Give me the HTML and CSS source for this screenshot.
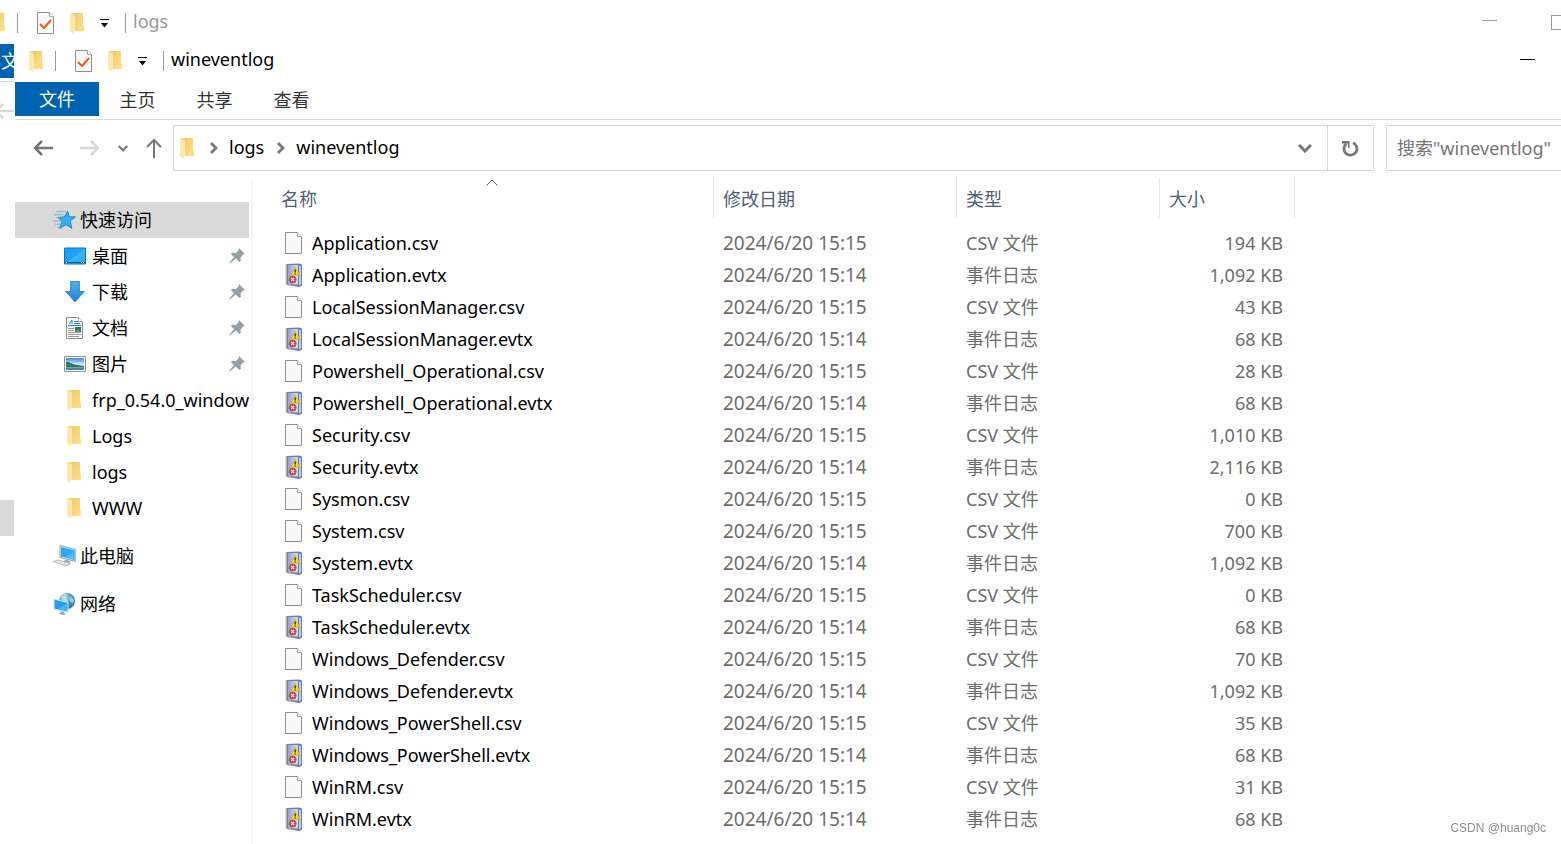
FILE: index.html
```html
<!DOCTYPE html>
<html lang="zh-CN">
<head>
<meta charset="utf-8">
<title>wineventlog</title>
<link rel="stylesheet" href="styles.css">
</head>
<body>
<svg class="defs" aria-hidden="true">
  <defs>
    <linearGradient id="gBack" x1="0" y1="0" x2="1" y2="1"><stop offset="0" stop-color="#eec969"/><stop offset="1" stop-color="#ffe08a"/></linearGradient>
    <linearGradient id="gBlue" x1="0" y1="0" x2="1" y2="1"><stop offset="0" stop-color="#0d9bff"/><stop offset=".5" stop-color="#1ea4ff"/><stop offset=".52" stop-color="#43b4ff"/><stop offset="1" stop-color="#1ea4ff"/></linearGradient>
    <linearGradient id="gArrow" x1="0" y1="0" x2="0" y2="1"><stop offset="0" stop-color="#55aeee"/><stop offset="1" stop-color="#1f80dc"/></linearGradient>
    <linearGradient id="gSky" x1="0" y1="0" x2="0" y2="1"><stop offset="0" stop-color="#3f86dc"/><stop offset=".55" stop-color="#d9effa"/><stop offset="1" stop-color="#a8c8dd"/></linearGradient>
    <radialGradient id="gGlobe" cx=".35" cy=".3" r=".8"><stop offset="0" stop-color="#b9e0f0"/><stop offset=".5" stop-color="#4d9cc0"/><stop offset="1" stop-color="#1f6c94"/></radialGradient>
    <linearGradient id="gBook" x1="0" y1="0" x2="1" y2="0"><stop offset="0" stop-color="#8fa6d0"/><stop offset="1" stop-color="#cfe0f5"/></linearGradient>
  </defs>
  <symbol id="folder" viewBox="0 0 14 21">
    <path d="M2 0h11v12l1 1v5H3z" fill="url(#gBack)"/>
    <path d="M0 0l5 3v14l-1 1v3L0 18z" fill="#ffe8a6"/><path d="M0 0h4l1 3z" fill="#f4d47d"/>
  </symbol>
  <symbol id="file" viewBox="0 0 17 22">
    <path d="M.5.5h12l4 4v17H.5z" fill="#f8f9f9" stroke="#8f8f8f"/><path d="M12.500.5v4h4" fill="#fff" stroke="#a5a5a5"/>
  </symbol>
  <symbol id="check" viewBox="0 0 17 22">
    <use href="#file" width="17" height="22"/><path d="M3 12l4 4 7-8" fill="none" stroke="#f25a12" stroke-width="2"/>
  </symbol>
  <symbol id="more" viewBox="0 0 9 9"><path d="M0 0h9v1H0zM1 4h7L4.500 8.500z" fill="#000"/></symbol>
  <symbol id="event" viewBox="0 0 17 24">
    <path d="M2 1L14 .5l3 1v21L14 24 2 22z" fill="#6d7fae"/>
    <path d="M3 2h10v19.500H3z" fill="url(#gBook)"/><path d="M14 3l2-.5v19l-2 .8z" fill="#b8cceb"/>
    <path d="M1.500 1.500v20.500" stroke="#777" stroke-width="2" stroke-dasharray="1 1"/>
    <path d="M10.200 4l4.300 8H6z" fill="#ffdb15" stroke="#c09a00" stroke-width=".5"/><path d="M10.200 6.500v3m0 1v1" stroke="#222" stroke-width="1.300"/>
    <circle cx="7.700" cy="16.500" r="3.700" fill="#d93a3c"/><path d="M6.200 15l3 3m0-3l-3 3" stroke="#fff" stroke-width="1.200"/>
  </symbol>
  <symbol id="star" viewBox="0 0 22 20">
    <path d="M14 1.500l1.500 5.500h6L16.500 11l1.500 7-5.500-3.500L6.500 18l2-6.500L5 7.500l6-.5z" fill="#33b0f5" stroke="#1679bc" stroke-width=".8"/>
    <path d="M3 2h9M1 5h9M3 8h4M0 11h7M2 14h5M4 17h3" stroke="#5daed8" stroke-width=".8"/>
  </symbol>
  <symbol id="desk" viewBox="0 0 22 17"><path d="M.5.5h21v16H.5z" fill="url(#gBlue)" stroke="#0b74c5"/><path d="M1 15h20" stroke="#075a9d"/><path d="M2 15h1m14 0h1m1 0h1" stroke="#fff"/></symbol>
  <symbol id="down" viewBox="0 0 18 20"><path d="M5 .5h8v9h4.500L9 19 .5 9.500H5z" fill="url(#gArrow)" stroke="#2b7fc8" stroke-width=".8"/></symbol>
  <symbol id="doc" viewBox="0 0 18 22">
    <use href="#file" width="17" height="22"/>
    <path d="M3 7l3-4v4M8 4.500h4M8 6.500h6M2 8.500h13" fill="none" stroke="#2186ce"/><path d="M2 11.500h6M2 13.500h6M2 15.500h13M2 17.500h13M2 19.500h11" stroke="#999"/><path d="M9 10h6v5H9z" fill="#2a6a94"/><path d="M9 14l3-2 3 3H9z" fill="#54915f"/>
  </symbol>
  <symbol id="pic" viewBox="0 0 22 16">
    <path d="M.5.5h21v15H.5z" fill="#fff" stroke="#929292"/><path d="M2 2h18v12H2z" fill="url(#gSky)"/><path d="M2 6c4-.5 5 2 9 2.500s5 1 9 1.500v1.500H2z" fill="#387164"/><path d="M2 12h18v2H2z" fill="#4d82a6"/>
  </symbol>
  <symbol id="pc" viewBox="0 0 23 21">
    <path d="M7 0l16 4v12L7 12z" fill="#e3eaf0" stroke="#738a9c" stroke-width=".8"/><path d="M8 1.500l14 3.500v9.500L8 11z" fill="#2da7f7"/><path d="M22 5v9.500L12 12z" fill="#52bbff"/>
    <path d="M13 14l5 2-4 2-4-2z" fill="#a5afb5"/><path d="M0 16l5-1.500L18 18l-5 2.500z" fill="#d4d9dc" stroke="#9ca4a9" stroke-width=".7"/><path d="M2 16.300l11 3M5 15.500l10 3" stroke="#fff" stroke-width=".7" stroke-dasharray="1.500 1"/>
  </symbol>
  <symbol id="net" viewBox="0 0 22 22">
    <circle cx="13.500" cy="8" r="8" fill="url(#gGlobe)"/><path d="M7 4c3-4 6-3 7-2l-2 3 3 2-2 4-3-2zM17 3l4 4-2 4-3-4z" fill="#c2e4ec" opacity=".65"/>
    <path d="M.5 6l14 3.500V19L.5 16z" fill="#229ff0" stroke="#d5e7f2"/><path d="M14 10v8L5 16z" fill="#46b4fa"/><path d="M7 18l4 1v2l2 .5-4 .5-4-1.500 2-.5z" fill="#9aabb5"/>
  </symbol>
  <symbol id="pin" viewBox="0 0 16 16"><path d="M10 0l6 6-2 .5-2.500 3 .3 3.500-1.500 1-3.500-3.500L1 15.500l-.7-.7L5 9.200 2 6l1-1.200 3.800.2 2.700-2.500z" fill="#94a0a8"/></symbol>
  <symbol id="left" viewBox="0 0 20 16"><path d="M9 1L2 8l7 7M2 8h18" fill="none" stroke="currentColor" stroke-width="2.500"/></symbol>
  <symbol id="right" viewBox="0 0 20 16"><path d="M11 1l7 7-7 7M18 8H0" fill="none" stroke="currentColor" stroke-width="2.500"/></symbol>
  <symbol id="up" viewBox="0 0 16 20"><path d="M1 9l7-7 7 7M8 2v18" fill="none" stroke="currentColor" stroke-width="2"/></symbol>
  <symbol id="chev" viewBox="0 0 14 9"><path d="M1 1l6 6 6-6" fill="none" stroke="currentColor" stroke-width="3"/></symbol>
  <symbol id="crumb" viewBox="0 0 8 12"><path d="M1 1l5 5-5 5" fill="none" stroke="currentColor" stroke-width="2.800"/></symbol>
  <symbol id="reload" viewBox="0 0 17 17"><path d="M11 2.700A6.500 6.500 0 1 1 4.500 3.500" fill="none" stroke="currentColor" stroke-width="2.800"/><path d="M0 1h7.500v7H6V3.500H0z" fill="currentColor"/></symbol>
</svg>

<header class="titlebar titlebar-back">
  <svg class="i-folder"><use href="#folder"/></svg><span class="sep"></span>
  <button class="qa qa-check" aria-label="属性"><svg class="i-file"><use href="#check"/></svg></button>
  <button class="qa" aria-label="新建文件夹"><svg class="i-folder"><use href="#folder"/></svg></button>
  <button class="qa" aria-label="自定义快速访问工具栏"><svg class="i-more"><use href="#more"/></svg></button>
  <span class="sep"></span><span class="title">logs</span>
  <div class="controls"><button class="min" aria-label="最小化"></button><button class="max" aria-label="最大化"></button></div>
</header>
<div class="stack">
  <aside class="behind">
    <div class="behind-tab">文件</div>
    <div class="behind-nav"><svg class="i-nav"><use href="#left"/></svg></div>
    <div class="behind-selected"></div>
  </aside>
  <main class="window">
    <header class="titlebar">
      <svg class="i-folder"><use href="#folder"/></svg><span class="sep"></span>
      <button class="qa qa-check" aria-label="属性"><svg class="i-file"><use href="#check"/></svg></button>
      <button class="qa" aria-label="新建文件夹"><svg class="i-folder"><use href="#folder"/></svg></button>
      <button class="qa" aria-label="自定义快速访问工具栏"><svg class="i-more"><use href="#more"/></svg></button>
      <span class="sep"></span><h1 class="title">wineventlog</h1>
      <div class="controls"><button class="min" aria-label="最小化"></button></div>
    </header>
    <nav class="tabs"><button class="tab tab-file">文件</button><button class="tab">主页</button><button class="tab">共享</button><button class="tab">查看</button></nav>
    <div class="navrow">
      <div class="arrows">
        <button aria-label="后退"><svg class="i-nav"><use href="#left"/></svg></button>
        <button class="off" aria-label="前进"><svg class="i-nav"><use href="#right"/></svg></button>
        <button aria-label="最近位置"><svg class="i-recent"><use href="#chev"/></svg></button>
        <button aria-label="上移"><svg class="i-up"><use href="#up"/></svg></button>
      </div>
      <div class="address">
        <svg class="i-folder"><use href="#folder"/></svg>
        <svg class="i-crumb"><use href="#crumb"/></svg><a href="#logs">logs</a>
        <svg class="i-crumb"><use href="#crumb"/></svg><a href="#wineventlog">wineventlog</a>
        <button class="history" aria-label="以前的位置"><svg class="i-chev"><use href="#chev"/></svg></button>
        <button class="reload" aria-label="刷新"><svg class="i-reload"><use href="#reload"/></svg></button>
      </div>
      <input class="search" type="text" aria-label="搜索" placeholder='搜索"wineventlog"'>
    </div>
    <div class="content">
      <nav class="tree">
        <a class="node root selected" href="#quick"><svg class="i-tree"><use href="#star"/></svg><span>快速访问</span></a>
        <a class="node" href="#desktop"><svg class="i-tree"><use href="#desk"/></svg><span>桌面</span><svg class="i-pin"><use href="#pin"/></svg></a>
        <a class="node" href="#downloads"><svg class="i-tree"><use href="#down"/></svg><span>下载</span><svg class="i-pin"><use href="#pin"/></svg></a>
        <a class="node" href="#documents"><svg class="i-tree"><use href="#doc"/></svg><span>文档</span><svg class="i-pin"><use href="#pin"/></svg></a>
        <a class="node" href="#pictures"><svg class="i-tree"><use href="#pic"/></svg><span>图片</span><svg class="i-pin"><use href="#pin"/></svg></a>
        <a class="node" href="#frp"><svg class="i-tree i-dir"><use href="#folder"/></svg><span>frp_0.54.0_windows</span></a>
        <a class="node" href="#Logs"><svg class="i-tree i-dir"><use href="#folder"/></svg><span>Logs</span></a>
        <a class="node" href="#logs"><svg class="i-tree i-dir"><use href="#folder"/></svg><span>logs</span></a>
        <a class="node" href="#www"><svg class="i-tree i-dir"><use href="#folder"/></svg><span>WWW</span></a>
        <a class="node root spaced" href="#pc"><svg class="i-tree"><use href="#pc"/></svg><span>此电脑</span></a>
        <a class="node root spaced" href="#network"><svg class="i-tree"><use href="#net"/></svg><span>网络</span></a>
      </nav>
      <table class="files">
        <colgroup><col class="c-name"><col class="c-date"><col class="c-type"><col class="c-size"></colgroup>
        <thead><tr><th>名称<svg class="i-sort" viewBox="0 0 12 7"><path d="M.5 6.500L6 1l5.500 5.500" fill="none" stroke="#555"/></svg></th><th>修改日期</th><th>类型</th><th>大小</th></tr></thead>
        <tbody id="rows"></tbody>
      </table>
    </div>
  </main>
</div>
<div class="watermark">CSDN @huang0c</div>
<script src="files.js"></script>
</body>
</html>
```
FILE: styles.css
```css
* { box-sizing: border-box; }
html { height: 100%; overflow: hidden; }
body {
  margin: 0;
  min-height: 100%;
  display: flex;
  flex-direction: column;
  background: #fff;
  color: #000;
  font: 18px/24px "Noto Sans", "Noto Sans CJK SC", sans-serif;
}
button { padding: 0; border: 0; background: none; color: inherit; font: inherit; }
a { color: inherit; text-decoration: none; }
svg { display: block; flex: none; }
.defs { position: absolute; width: 0; height: 0; }

.i-folder { width: 14px; height: 21px; }
.i-file { width: 17px; height: 22px; }
.i-event { width: 17px; height: 24px; }
.i-more { width: 9px; height: 9px; }
.i-nav { width: 20px; height: 16px; }
.i-recent { width: 10px; height: 7px; }
.i-up { width: 16px; height: 20px; }
.i-crumb { width: 8px; height: 12px; }
.i-chev { width: 14px; height: 9px; }
.i-reload { width: 17px; height: 17px; }

.titlebar { display: flex; align-items: center; height: 34px; margin-bottom: 4px; padding-left: 14px; }
.titlebar-back { height: 46px; margin: 0 0 -2px -9px; padding: 0; }
.titlebar-back .title { color: #999; }
.sep { width: 1px; height: 20px; margin-left: 12px; background: #999; }
.qa { margin-left: 16px; }
.qa-check { margin-left: 19px; }
.qa + .sep { margin-left: 16px; }
.title { margin: 0 0 4px 7px; font-size: 18px; font-weight: 400; }
.controls { display: flex; gap: 54px; align-items: center; margin-left: auto; padding-right: 26px; }
.titlebar-back .controls { padding: 0 0 2px; }
.min { width: 15px; height: 16px; background: linear-gradient(#000, #000) 0 6px / 15px 1px no-repeat; }
.titlebar-back .min { background-image: linear-gradient(#999, #999); }
.max { width: 10px; height: 15px; border: 1px solid #999; border-right: 0; }

.stack { display: flex; flex: 1; }
.behind { flex: none; width: 14px; margin-right: 1px; overflow: hidden; }
.behind-tab { height: 34px; padding: 5px 0 0 1px; background: #0063b1; color: #fff; white-space: nowrap; }
.behind-nav { display: flex; justify-content: flex-end; align-items: center; height: 58px; margin-top: 3px; border-top: 1px solid #dadada; color: #d9d9d9; }
.behind-selected { height: 36px; margin-top: 361px; background: #d9d9d9; }
.window { flex: 1; min-width: 0; }

.tabs { display: flex; height: 38px; border-bottom: 1px solid #dadada; }
.tab { width: 77px; height: 36px; color: #333; }
.tab-file { width: 84px; height: 34px; background: #0063b1; color: #fff; }

.navrow { display: flex; height: 46px; margin-top: 5px; }
.arrows { display: flex; align-items: center; gap: 18px; width: 158px; padding-left: 18px; color: #777; }
.arrows button:nth-child(2) { margin-left: 9px; }
.arrows .off { color: #d9d9d9; }
.address { flex: 1; display: flex; align-items: center; min-width: 0; padding-left: 6px; border: 1px solid #d9d9d9; color: #777; }
.address a { margin: 0 13px 2px 11px; color: #000; }
.address .i-folder + .i-crumb { margin-left: 16px; }
.history { margin: 0 15px 0 auto; }
.reload { display: flex; align-items: center; justify-content: center; width: 46px; height: 44px; border-left: 1px solid #d9d9d9; }
.search { width: 175px; margin-left: 12px; padding: 0 0 0 10px; border: 1px solid #d9d9d9; border-right: 0; border-radius: 0; background: #fff; font: inherit; outline: 0; }
.search::placeholder { color: #757575; opacity: 1; }

.content { display: flex; min-height: 673px; padding-top: 7px; }
.tree { flex: none; width: 238px; padding: 24px 2px 0 0; border-right: 2px solid #f5f5f5; }
.node { display: flex; align-items: center; gap: 6px; height: 36px; padding-left: 49px; overflow: hidden; white-space: nowrap; }
.node span { flex: 1; min-width: 0; overflow: hidden; }
.root { gap: 4px; padding-left: 38px; }
.selected { background: #d9d9d9; }
.spaced { margin-top: 12px; }
.i-tree { width: 22px; height: 22px; }
.root .i-tree { width: 23px; }
.i-dir { width: 20px; height: 21px; margin-right: 2px; }
.i-pin { width: 16px; height: 16px; margin-right: 4px; }

.files { flex: none; align-self: flex-start; margin-left: 18px; border-collapse: separate; border-spacing: 0; table-layout: fixed; width: 1024px; color: #6d6d6d; }
.c-name { width: 443px; }
.c-date { width: 243px; }
.c-type { width: 203px; }
.c-size { width: 135px; }
.files th { position: relative; height: 40px; padding: 1px 0 0 9px; border-right: 1px solid #e5e5e5; color: #4c607a; font-weight: 400; text-align: left; }
.files th:first-child { padding-left: 10px; }
.files tbody::before { content: ""; display: block; height: 9px; }
.files td { height: 32px; padding: 0 0 0 9px; white-space: nowrap; }
.files td:nth-child(2) { font-size: 19px; }
.files td:last-child { padding: 0 12px 0 0; text-align: right; }
.i-sort { position: absolute; top: 1px; left: 50%; width: 12px; height: 7px; margin-left: -6px; }
.name { display: flex; align-items: center; gap: 10px; padding-left: 5px; color: #000; }

.watermark { position: fixed; right: 15px; bottom: 8px; color: #8f8f8f; font: 12px/16px "Liberation Sans", sans-serif; }
```
FILE: files.js
```js
const files = [
  ["Application", "194", "1,092"],
  ["LocalSessionManager", "43", "68"],
  ["Powershell_Operational", "28", "68"],
  ["Security", "1,010", "2,116"],
  ["Sysmon", "0", null],
  ["System", "700", "1,092"],
  ["TaskScheduler", "0", "68"],
  ["Windows_Defender", "70", "1,092"],
  ["Windows_PowerShell", "35", "68"],
  ["WinRM", "31", "68"]
];

function row(name, time, type, size, icon) {
  return `<tr><td><div class="name"><svg class="i-${icon}"><use href="#${icon}"/></svg><span>${name}</span></div></td>` +
    `<td>2024/6/20 ${time}</td><td>${type}</td><td>${size} KB</td></tr>`;
}

document.getElementById("rows").innerHTML = files.map(([name, csv, evtx]) =>
  row(name + ".csv", "15:15", "CSV 文件", csv, "file") +
  (evtx ? row(name + ".evtx", "15:14", "事件日志", evtx, "event") : "")
).join("");
```
